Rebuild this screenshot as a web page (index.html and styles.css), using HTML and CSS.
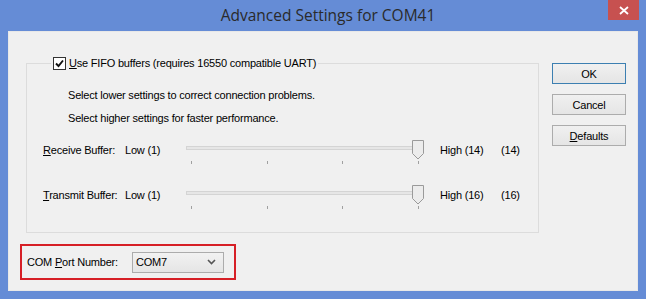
FILE: index.html
```html
<!DOCTYPE html>
<html>
<head>
    <title>Advanced Settings for COM41</title>
    <link rel="stylesheet" href="styles.css">
</head>
<body>

    <div class="window">
        <div class="titlebar">
            <span class="title">Advanced Settings for COM41</span>
            <div class="close">
                <svg width="10" height="9" viewBox="0 0 10 9">
                    <path d="M1 1 L9 8 M9 1 L1 8" stroke="#fff" stroke-width="1.8" fill="none"/>
                </svg>
            </div>
        </div>

        <div class="client">
            <div class="main">
                <fieldset class="group">
                    <legend class="group-legend">
                        <span class="checkbox">
                            <svg width="11" height="11" viewBox="0 0 11 11">
                                <path d="M2 5.5 L4.5 8 L9 2.5" stroke="#111" stroke-width="1.9" fill="none"/>
                            </svg>
                        </span>
                        <span><u>U</u>se FIFO buffers (requires 16550 compatible UART)</span>
                    </legend>
                    <div class="group-body">
                        <p class="hint">Select lower settings to correct connection problems.</p>
                        <p class="hint">Select higher settings for faster performance.</p>

                        <div class="buffer-row">
                            <span class="cell"><u>R</u>eceive Buffer:</span>
                            <span class="cell">Low (1)</span>
                            <div class="slider">
                                <div class="track"></div>
                                <svg class="thumb" width="12" height="20" viewBox="0 0 12 20">
                                    <path d="M0.5 0.5 H11.5 V13.5 L6 19 L0.5 13.5 Z" fill="#ececec" stroke="#9a9a9a"/>
                                </svg>
                                <div class="ticks"><i></i><i></i><i></i><i></i></div>
                            </div>
                            <span class="cell high">High (14)</span>
                            <span class="cell">(14)</span>
                        </div>

                        <div class="buffer-row">
                            <span class="cell"><u>T</u>ransmit Buffer:</span>
                            <span class="cell">Low (1)</span>
                            <div class="slider">
                                <div class="track"></div>
                                <svg class="thumb" width="12" height="20" viewBox="0 0 12 20">
                                    <path d="M0.5 0.5 H11.5 V13.5 L6 19 L0.5 13.5 Z" fill="#ececec" stroke="#9a9a9a"/>
                                </svg>
                                <div class="ticks"><i></i><i></i><i></i><i></i></div>
                            </div>
                            <span class="cell high">High (16)</span>
                            <span class="cell">(16)</span>
                        </div>
                    </div>
                </fieldset>

                <div class="port-box">
                    <span>COM <u>P</u>ort Number:</span>
                    <div class="select">
                        <span>COM7</span>
                        <svg width="9" height="6" viewBox="0 0 9 6">
                            <path d="M1 1 L4.5 4.5 L8 1" stroke="#555" stroke-width="1.6" fill="none"/>
                        </svg>
                    </div>
                </div>
            </div>

            <div class="buttons">
                <button class="btn btn-default">OK</button>
                <button class="btn">Cancel</button>
                <button class="btn"><u>D</u>efaults</button>
            </div>
        </div>
    </div>

</body>
</html>
```

FILE: styles.css
```css
body {
    margin: 0;
    font-family: "Liberation Sans", Arial, sans-serif;
    font-size: 11px;
    letter-spacing: -0.2px;
    color: #000;
}

.window {
    width: 646px;
    height: 299px;
    box-sizing: border-box;
    background-color: #658cd6;
    border-right: 4px solid #658cd6;
    position: relative;
    overflow: hidden;
}

.titlebar {
    height: 31px;
    display: flex;
    align-items: center;
    justify-content: center;
}

.title {
    font-family: "Open Sans", "Noto Sans", sans-serif;
    font-size: 15.5px;
    letter-spacing: 0;
    color: #2a2a2a;
    margin-top: -1px;
    margin-left: 14px;
}

.close {
    position: absolute;
    top: 0;
    left: 608px;
    width: 31px;
    height: 20px;
    background-color: #c75150;
    display: flex;
    align-items: center;
    justify-content: center;
}

.client {
    margin-left: 8px;
    width: 630px;
    height: 260px;
    background-color: #f0f0f0;
    display: flex;
    box-shadow: inset 0 0 0 1px #e8e8e8;
}

.main {
    padding-left: 12px;
    padding-top: 25px;
}

.group {
    margin: 0 0 0 6px;
    padding: 0;
    width: 513px;
    box-sizing: border-box;
    border: 1px solid #dcdcdc;
    min-inline-size: 0;
}

.group-legend {
    margin-left: 24px;
    padding: 0 2px 0 2px;
    height: 14px;
    display: flex;
    align-items: center;
    gap: 3px;
}

.checkbox {
    width: 11px;
    height: 11px;
    border: 1px solid #333;
    background-color: #fff;
    display: flex;
}

.group-body {
    padding: 19px 0 22px 16px;
}

.hint {
    margin: 0 0 10px 25px;
    line-height: 13px;
}

.buffer-row {
    display: grid;
    grid-template-columns: 82px 61px 238px 77px auto;
    height: 25px;
    margin-top: 20px;
}

.hint + .buffer-row {
    margin-top: 15px;
}

.buffer-row .cell {
    padding-top: 4px;
    line-height: 13px;
    white-space: nowrap;
}

.buffer-row .high {
    padding-left: 16px;
}

.slider {
    position: relative;
    width: 238px;
    height: 25px;
}

.track {
    position: absolute;
    top: 6px;
    left: 0;
    right: 0;
    height: 2px;
    background-color: #e6e6e6;
    border: 1px solid #d4d4d4;
}

.thumb {
    position: absolute;
    top: 0;
    right: 0;
}

.ticks {
    position: absolute;
    top: 21px;
    left: 5px;
    right: 5px;
    display: flex;
    justify-content: space-between;
}

.ticks i {
    display: block;
    width: 1px;
    height: 3px;
    background-color: #a0a0a0;
}

.port-box {
    margin-top: 11px;
    width: 216px;
    height: 36px;
    box-sizing: border-box;
    border: 2px solid #d61f26;
    display: flex;
    align-items: center;
    padding-left: 5px;
}

.port-box > span {
    width: 105px;
}

.select {
    width: 92px;
    height: 21px;
    box-sizing: border-box;
    border: 1px solid #acacac;
    background: linear-gradient(#f2f2f2, #e5e5e5);
    display: flex;
    align-items: center;
    justify-content: space-between;
    padding: 0 7px 0 3px;
}

.buttons {
    margin-left: 13px;
    padding-top: 32px;
    display: flex;
    flex-direction: column;
    gap: 10px;
}

.btn {
    width: 74px;
    height: 21px;
    font-family: "Liberation Sans", Arial, sans-serif;
    font-size: 11px;
    letter-spacing: -0.2px;
    color: #000;
    border: 1px solid #acacac;
    background: linear-gradient(#f0f0f0, #e5e5e5);
    padding: 0;
}

.btn-default {
    border-color: #3c7fb1;
}
```
